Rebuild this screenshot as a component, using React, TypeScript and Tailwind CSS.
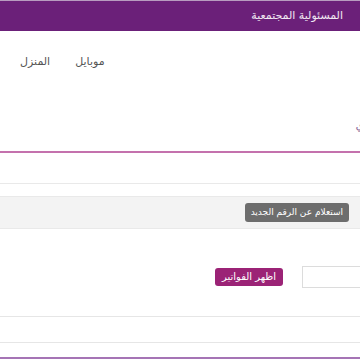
import React from 'react';

const font = { fontFamily: '"DejaVu Sans", "Noto Sans", sans-serif' };

export default function App() {
  return (
    <div dir="rtl" style={font} className="w-[360px] h-[360px] overflow-hidden bg-white flex flex-col">
      <div className="h-[1px] bg-[#b89cc0]" />
      {/* header */}
      <div className="h-[30px] bg-[#6b2079] flex items-center pr-[17px]">
        <span className="text-[11px] text-white/90">المسئولية المجتمعية</span>
      </div>

      {/* nav */}
      <div className="flex justify-end gap-[25px] pl-[20px] pt-[23px] h-[60px] text-[11px] text-[#555]">
        <a>موبايل</a>
        <a>المنزل</a>
      </div>

      <div className="relative h-[60px]">
        <span className="absolute right-[-5px] top-[25px] text-[12px] text-[#8a6a9a]">ي</span>
      </div>

      <div className="h-[2px] bg-[#c471ad]" />
      <div className="h-[31px] border-b border-[#e9e9e9]" />
      <div className="h-[13px] border-b border-[#e9e9e9]" />

      {/* inquiry band */}
      <div className="h-[32px] bg-[#f3f3f3] border-b border-[#e9e9e9] flex items-center pr-[11px]">
        <button className="h-[19px] px-[6px] rounded-[3px] bg-[#6d6d6d] text-white text-[9px] leading-none">
          استعلام عن الرقم الجديد
        </button>
      </div>

      {/* invoices */}
      <div className="flex gap-[19px] pt-[37px] h-[87px] items-start">
        <input className="w-[70px] h-[22px] mr-[-12px] border border-[#dcdcdc] bg-white shrink-0" />
        <button className="mt-[2px] h-[18px] w-[68px] rounded-[3px] bg-[#9b2376] text-white text-[10px] leading-none">
          اظهر الفواتير
        </button>
      </div>

      <div className="h-[26px] border-t border-[#e6e6e6]" />
      <div className="h-[15px] border-t border-[#e6e6e6]" />
      <div className="h-[2px] bg-[#a574b5]" />
    </div>
  );
}
